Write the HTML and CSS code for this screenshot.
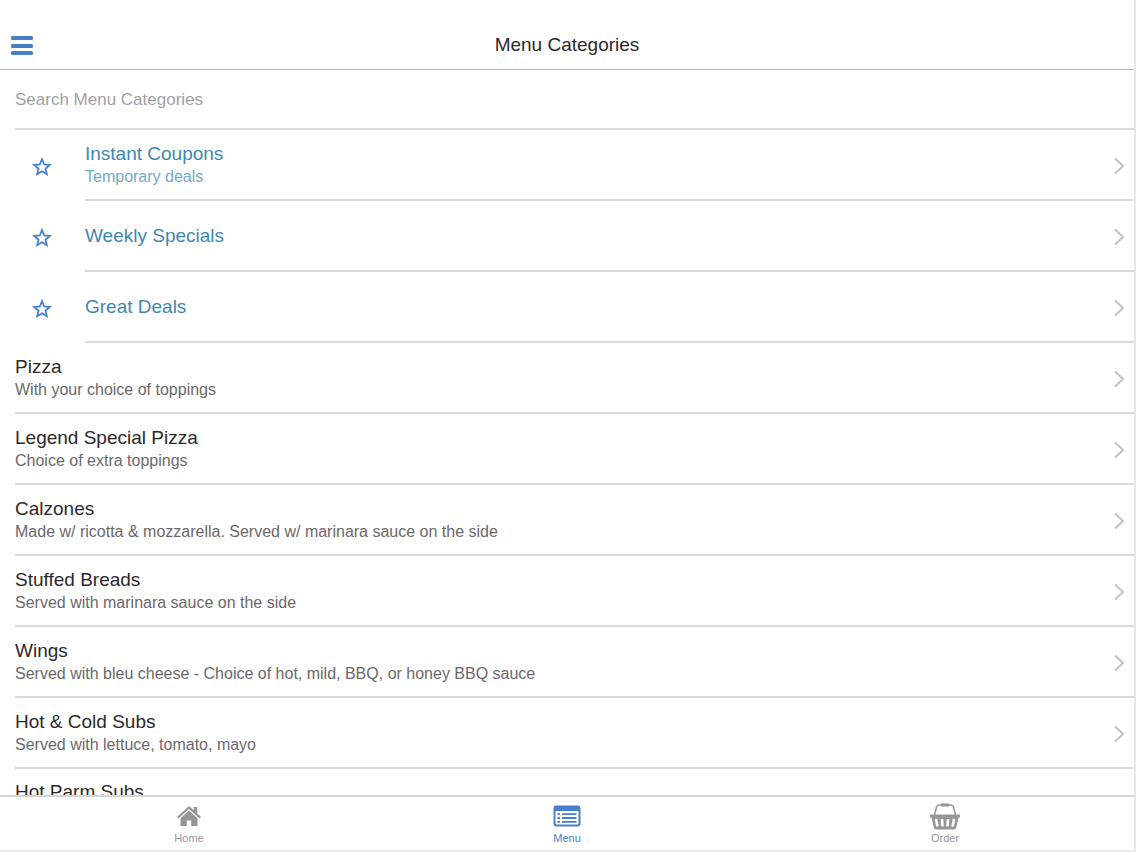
FILE: index.html
```html
<!DOCTYPE html>
<html lang="en">
<head>
<meta charset="utf-8">
<meta name="viewport" content="width=device-width, initial-scale=1">
<title>Menu Categories</title>
<link rel="stylesheet" href="styles.css">
</head>
<body>
<svg class="defs" aria-hidden="true">
  <symbol id="star" viewBox="0 0 20 20"><path d="M10 2.200l2.200 5.300 5.600.5-4.300 3.700 1.300 5.500-4.800-2.900-4.800 2.900 1.300-5.500-4.300-3.700 5.600-.5z" fill="none" stroke="currentColor" stroke-width="1.800"/></symbol>
  <symbol id="chevron" viewBox="0 0 12 18"><path d="M2 1.500L10 9l-8 7.500" fill="none" stroke="currentColor" stroke-width="2.200"/></symbol>
</svg>
<div class="app">
  <header class="navbar">
    <button class="menu-button" aria-label="Open menu">
      <svg width="22" height="20" viewBox="0 0 22 20" fill="currentColor"><rect width="22" height="4" rx="1.500"/><rect y="8" width="22" height="4" rx="1.500"/><rect y="15" width="22" height="4" rx="1.500"/></svg>
    </button>
    <h1 class="navbar-title">Menu Categories</h1>
  </header>
  <main class="content">
    <div class="search"><input class="search-input" type="text" placeholder="Search Menu Categories" aria-label="Search Menu Categories"></div>
    <nav class="list" aria-label="Categories">
      <a class="item featured" href="#"><svg class="star"><use href="#star"/></svg><span class="item-body"><span class="item-text"><span class="item-title">Instant Coupons</span><span class="item-note">Temporary deals</span></span><svg class="chevron"><use href="#chevron"/></svg></span></a>
      <a class="item featured" href="#"><svg class="star"><use href="#star"/></svg><span class="item-body"><span class="item-text"><span class="item-title">Weekly Specials</span></span><svg class="chevron"><use href="#chevron"/></svg></span></a>
      <a class="item featured" href="#"><svg class="star"><use href="#star"/></svg><span class="item-body"><span class="item-text"><span class="item-title">Great Deals</span></span><svg class="chevron"><use href="#chevron"/></svg></span></a>
      <a class="item" href="#"><span class="item-body"><span class="item-text"><span class="item-title">Pizza</span><span class="item-note">With your choice of toppings</span></span><svg class="chevron"><use href="#chevron"/></svg></span></a>
      <a class="item" href="#"><span class="item-body"><span class="item-text"><span class="item-title">Legend Special Pizza</span><span class="item-note">Choice of extra toppings</span></span><svg class="chevron"><use href="#chevron"/></svg></span></a>
      <a class="item" href="#"><span class="item-body"><span class="item-text"><span class="item-title">Calzones</span><span class="item-note">Made w/ ricotta &amp; mozzarella. Served w/ marinara sauce on the side</span></span><svg class="chevron"><use href="#chevron"/></svg></span></a>
      <a class="item" href="#"><span class="item-body"><span class="item-text"><span class="item-title">Stuffed Breads</span><span class="item-note">Served with marinara sauce on the side</span></span><svg class="chevron"><use href="#chevron"/></svg></span></a>
      <a class="item" href="#"><span class="item-body"><span class="item-text"><span class="item-title">Wings</span><span class="item-note">Served with bleu cheese - Choice of hot, mild, BBQ, or honey BBQ sauce</span></span><svg class="chevron"><use href="#chevron"/></svg></span></a>
      <a class="item" href="#"><span class="item-body"><span class="item-text"><span class="item-title">Hot &amp; Cold Subs</span><span class="item-note">Served with lettuce, tomato, mayo</span></span><svg class="chevron"><use href="#chevron"/></svg></span></a>
      <a class="item last" href="#"><span class="item-body"><span class="item-text"><span class="item-title">Hot Parm Subs</span></span></span></a>
    </nav>
  </main>
  <nav class="tabs" aria-label="Main">
    <a class="tab" href="#">
      <svg class="tab-icon" viewBox="0 0 30 28" fill="currentColor"><path d="M15 4L3 15l1.400 1.600L15 6.900l10.600 9.700L27 15l-3.700-3.400V5h-3.600v3.300z"/><path d="M15 8.400L6.500 16.200V24h6.300v-5.500h4.400V24h6.300v-7.800z"/></svg>
      Home
    </a>
    <a class="tab active" href="#" aria-current="page">
      <svg class="tab-icon" viewBox="0 0 30 28"><rect x="2.500" y="4.500" width="25" height="19" rx="2" fill="none" stroke="currentColor" stroke-width="2"/><path d="M2 4h26v5H2z" fill="currentColor"/><path d="M5.500 12.200h2.500M5.500 16h2.500M5.500 19.800h2.500M10 12.200h14.500M10 16h14.500M10 19.800h14.500" stroke="currentColor" stroke-width="1.800"/></svg>
      Menu
    </a>
    <a class="tab" href="#">
      <svg class="tab-icon" viewBox="0 0 30 28"><path d="M4.500 13L6.500 5Q7 3 9 3h12q2 0 2.500 2l2 8" fill="none" stroke="currentColor" stroke-width="1.500"/><path d="M11 1.500h8v3h-8zM0 12.500h30v3h-1.500l-2.300 10.200q-.4 1.800-2.200 1.800H6q-1.800 0-2.200-1.800L1.500 15.500H0z" fill="currentColor"/><path d="M6 17l1.500 7.500M12 17l.5 7.500M18 17l-.5 7.500M24 17l-1.500 7.500" stroke="#fff" stroke-width="2.600"/></svg>
      Order
    </a>
  </nav>
</div>
</body>
</html>
```
FILE: styles.css
```css
* { box-sizing: border-box; }
body {
  margin: 0;
  font-family: "Liberation Sans", Arial, sans-serif;
  color: #2c282c;
  background: #fff;
}
.defs { display: none; }
.app {
  display: flex;
  flex-direction: column;
  height: 100vh;
  border-right: 2px solid #e9e6e9;
  border-bottom: 2px solid #ececec;
}
.navbar {
  flex: none;
  display: grid;
  grid-template-columns: 48px 1fr 48px;
  align-items: center;
  padding: 20px 0 0;
  height: 70px;
  border-bottom: 1px solid #b9b8b9;
}
.menu-button {
  display: flex;
  padding: 2px 0 0 11px;
  border: 0;
  background: none;
  color: #477fc4;
}
.navbar-title {
  margin: 0;
  font-size: 19px;
  font-weight: 400;
  line-height: 24px;
  text-align: center;
}
.content { flex: 1; min-height: 0; overflow: hidden; }
.search { padding-left: 15px; }
.search-input {
  display: block;
  width: 100%;
  height: 60px;
  padding: 2px 0 0;
  border: 0;
  border-bottom: 2px solid #dcdadc;
  outline: 0;
  background: none;
  font: 17px "Liberation Sans", Arial, sans-serif;
  color: #2c282c;
}
.search-input::placeholder { color: #a29fa3; opacity: 1; }
.item {
  display: flex;
  align-items: center;
  padding-left: 15px;
  color: inherit;
  text-decoration: none;
}
.item-body {
  flex: 1;
  display: flex;
  align-items: center;
  justify-content: space-between;
  height: 71px;
  padding-right: 9px;
  border-bottom: 2px solid #dcd8dc;
}
.item-text { display: flex; flex-direction: column; }
.item-title { font-size: 19px; line-height: 24px; }
.item-note { font-size: 16px; line-height: 22px; color: #6b686b; }
.last .item-body { align-items: flex-start; padding-top: 11px; }
.featured { color: #3f88b0; }
.featured .item-note { color: #72a9c6; }
.star { width: 20px; height: 20px; margin: 2px 33px 0 17px; color: #477fd0; }
.chevron { width: 12px; height: 18px; margin-top: 3px; color: #c5c3c6; }
.tabs {
  flex: none;
  display: flex;
  height: 55px;
  border-top: 2px solid #d5d5d6;
}
.tab {
  flex: 1;
  display: flex;
  flex-direction: column;
  align-items: center;
  padding-top: 5px;
  font-size: 11px;
  line-height: 16px;
  color: #98959a;
  text-decoration: none;
}
.tab.active { color: #477fc8; }
.tab-icon { width: 30px; height: 28px; }
```
